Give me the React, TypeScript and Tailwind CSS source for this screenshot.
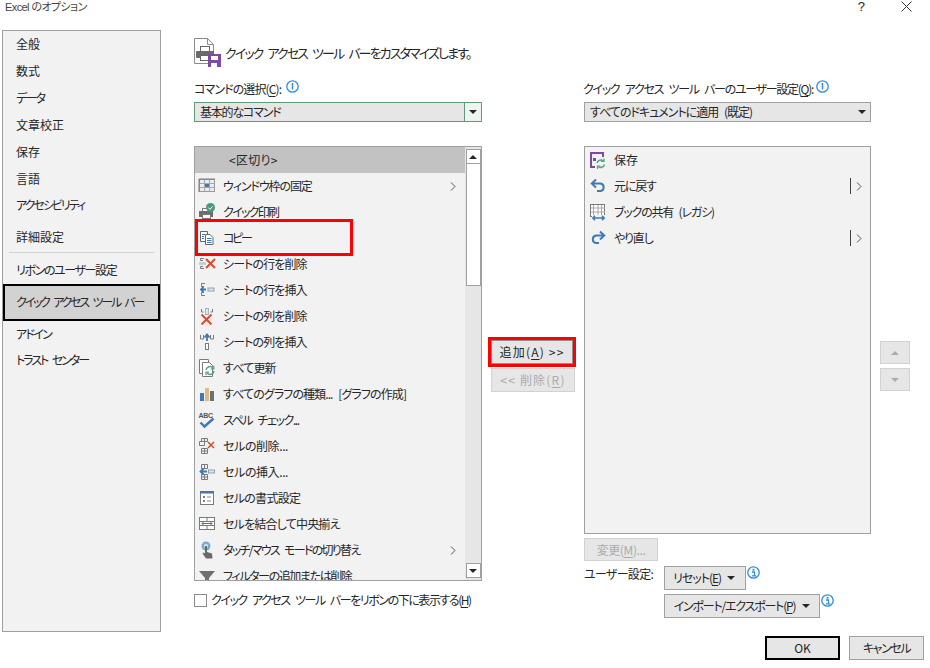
import React from "react";

const G = "#7a7a7a";
const B = "#3f78b5";
const R = "#d2502d";

const Svg = ({ children, w = 18, h = 18, vb }: { children: React.ReactNode; w?: number; h?: number; vb?: string }) => (
  <svg width={w} height={h} viewBox={vb ?? `0 0 ${w} ${h}`} fill="none" className="block shrink-0">
    {children}
  </svg>
);

const Freeze = () => (
  <Svg>
    <rect x="1.5" y="2.5" width="15" height="12" fill="#ececec" stroke="#9a9a9a" />
    <path d="M1.5 6.5h15M1.5 10.5h15M6.5 2.5v12M11.500 2.500v12" stroke="#a8a8a8" />
    <path d="M1 2h16M1 2v13" stroke="#7a7a7a" />
    <rect x="7" y="7" width="4" height="3" fill="#3f78b5" />
  </Svg>
);
const QuickPrint = () => (
  <Svg>
    <rect x="4.500" y="5.500" width="8" height="4" fill="#fff" stroke={G} />
    <rect x="1" y="8" width="14" height="6" fill="#6d6d6d" />
    <rect x="4.500" y="11.500" width="8" height="4" fill="#fff" stroke={G} />
    <circle cx="12.500" cy="4.500" r="4.500" fill="#4c9b78" />
    <path d="M10.300 4.600l1.700 1.700 2.600-3" stroke="#fff" />
  </Svg>
);
const Copy = () => (
  <Svg>
    <path d="M2.500 2.500h7v10h-7z" fill="#fff" stroke="#666" />
    <path d="M7.500 5.500h4.500l3 3v7H7.500z" fill="#fff" stroke="#666" />
    <path d="M9 9.500h4.500M9 11.500h4.500M9 13.500h4.500" stroke={B} />
    <path d="M4 5.500h3M4 7.500h2M4 9.500h2" stroke={B} />
  </Svg>
);
const XMark = ({ x, y, s = 9, sw = 2 }: { x: number; y: number; s?: number; sw?: number }) => (
  <path d={`M${x} ${y}l${s} ${s}M${x + s} ${y}l-${s} ${s}`} stroke={R} strokeWidth={sw} />
);
const DelRow = () => (
  <Svg>
    <path d="M6 3.500H2.500v2H5M6 13.500H2.500v-2H5" stroke={G} />
    <rect x="1" y="7" width="7" height="3" fill="#c3cfdd" />
    <XMark x={8} y={4} />
  </Svg>
);
const InsRow = () => (
  <Svg>
    <path d="M7 2.500H3.500v3H6M7 14.500H3.500v-3H6" stroke={G} />
    <path d="M8 8.500H3M5.500 6L3 8.500 5.500 11" stroke={B} strokeWidth="1.800" />
    <rect x="10" y="7" width="6" height="3" fill="#dfe5ec" stroke="#93a0ad" />
  </Svg>
);
const DelCol = () => (
  <Svg>
    <path d="M3.500 2v3h2M14.500 2v3h-2" stroke={G} />
    <rect x="7.500" y="1.500" width="3" height="6" fill="#dfe5ec" stroke="#a6b2c0" />
    <XMark x={3.500} y={7.500} s={10} />
  </Svg>
);
const InsCol = () => (
  <Svg>
    <path d="M2.500 2v4h3V2M12.500 2v4h3V2" stroke={G} />
    <path d="M9 8V2M6.500 4.500L9 1.500l2.500 3" stroke={B} strokeWidth="1.800" />
    <rect x="7.500" y="10.500" width="3" height="6" fill="#fff" stroke={G} />
  </Svg>
);
const RefreshAll = () => (
  <Svg w={20} h={20}>
    <path d="M1.500 1.500h9v14h-9z" fill="#fff" stroke={G} />
    <path d="M4.500 4.500h7l3 3v11h-10z" fill="#fff" stroke={G} />
    <path d="M8 12a4 4 0 017-2M16 13a4 4 0 01-7 2" stroke="#57a383" strokeWidth="1.600" />
    <path d="M15.800 7.800v3h-3M8 17.200v-3h3" stroke="#57a383" strokeWidth="1.200" />
  </Svg>
);
const Chart = () => (
  <Svg>
    <rect x="2" y="8" width="4" height="8" fill={B} />
    <rect x="7" y="3" width="4" height="13" fill="#e0b985" />
    <rect x="12" y="6" width="4" height="10" fill="#6f6f6f" />
  </Svg>
);
const Spell = () => (
  <svg width="18" height="18" viewBox="0 0 18 18" fill="none" className="block shrink-0">
    <text x="0.500" y="6.500" fontSize="7" fontWeight="700" fill="#555" fontFamily="Liberation Sans, sans-serif" letterSpacing="-0.300">ABC</text>
    <path d="M2.500 11.500l4 4 9-8" stroke={B} strokeWidth="2.400" />
  </svg>
);
const DelCell = () => (
  <Svg>
    <path d="M3.500 1.500h6v3h-6zM6.500 1.500v3M1.500 4.500h5v4h-5zM3.500 11.500h6v5h-6zM6.500 11.500v5M3.500 14h6" stroke={G} />
    <path d="M10 5l6 6M16 5l-6 6" stroke={R} strokeWidth="1.500" />
  </Svg>
);
const InsCell = () => (
  <Svg>
    <path d="M3.500 1.500h6v4h-6zM6.500 1.500v4M3.500 11.500h6v5h-6zM6.500 11.500v5M3.500 14h6" stroke={G} />
    <path d="M9 8.500H3M5.500 5.500L2.500 8.500l3 3" stroke={B} strokeWidth="1.800" />
    <rect x="10.500" y="7" width="6" height="3" fill="#dfe5ec" stroke="#93a0ad" />
  </Svg>
);
const CellFormat = () => (
  <Svg>
    <rect x="2.500" y="2.500" width="13" height="13" fill="#fff" stroke={G} />
    <rect x="2" y="2" width="14" height="2.500" fill={B} />
    <path d="M5 8h2M5 12h2" stroke="#555" strokeWidth="1.500" />
    <path d="M9 8h4M9 12h4" stroke="#888" />
  </Svg>
);
const Merge = () => (
  <Svg>
    <rect x="1.500" y="2.500" width="15" height="12" fill="#fff" stroke={G} />
    <path d="M2 6.500h14M2 10.500h14M9 2.500v4M9 10.500v4" stroke={G} />
    <path d="M4 8.500h10M5.500 7L4 8.500 5.500 10M12.500 7L14 8.500 12.500 10" stroke={B} />
  </Svg>
);
const Touch = () => (
  <Svg>
    <circle cx="8" cy="5" r="4.500" fill="#7da9d4" />
    <circle cx="8" cy="5" r="2" fill="#dbe7f2" />
    <path d="M7 5h2v6l5 1.500.5 5H8L4.500 12.500l1-1L7 12.500z" fill="#6a6a6a" />
  </Svg>
);
const Filter = () => (
  <Svg>
    <path d="M1 4h16l-6 7v6H7v-6z" fill="#6f6f6f" />
  </Svg>
);
const SaveQ = () => (
  <Svg>
    <path d="M1 1h14v5h-2V3H3v12h3v2H1z" fill="#7d4a9f" />
    <path d="M4 7h3v3H4z" fill="#7d4a9f" />
    <path d="M8 12a4 4 0 016.500-2M15.500 13.500a4 4 0 01-6.500 2" stroke="#57a383" strokeWidth="1.500" />
    <path d="M15 7.500v3h-3M8.500 18v-3h3" stroke="#57a383" strokeWidth="1.200" />
  </Svg>
);
const Undo = () => (
  <Svg>
    <path d="M4 6.500h7.500a3.800 3.800 0 010 7.500H8" stroke={B} strokeWidth="2" />
    <path d="M7 2.500L2.800 6.500 7 10.500" stroke={B} strokeWidth="2" />
  </Svg>
);
const Redo = () => (
  <Svg>
    <path d="M14 6.500H7a3.800 3.800 0 000 7.500h3" stroke={B} strokeWidth="2" />
    <path d="M11 2.500l4.200 4L11 10.500" stroke={B} strokeWidth="2" />
  </Svg>
);
const Share = () => (
  <Svg w={18} h={18}>
    <rect x="1.500" y="1.500" width="14" height="12" fill="#fff" stroke={G} />
    <path d="M4.500 2v11M9 2v11M12.500 2v11M2 5h14M2 9h14" stroke="#a8a8a8" />
    <rect x="3" y="12" width="14" height="5" fill="#f2f2f2" />
    <path d="M4 15h11M6 12.800L3.800 15 6 17.200M13 12.800l2.200 2.200-2.200 2.200" stroke={B} strokeWidth="1.500" />
  </Svg>
);
const HeaderIcon = () => (
  <Svg w={28} h={30}>
    <path d="M1.500.5h13l6 6v19H1.500z" fill="#fff" stroke="#8c8c8c" />
    <path d="M14.500.5v6h6" stroke="#8c8c8c" />
    <rect x="7.500" y="8.500" width="9" height="5" fill="#fff" stroke="#666" />
    <rect x="3" y="13" width="18" height="7" rx="1" fill="#6a6a6a" />
    <rect x="7.500" y="17.500" width="9" height="5" fill="#fff" stroke="#666" />
    <rect x="15" y="16" width="13" height="13" fill="#7d4a9f" />
    <rect x="18" y="18" width="7" height="4" fill="#fff" />
    <rect x="18" y="25" width="6" height="4" fill="#fff" />
  </Svg>
);

const Info = ({ bold = false }: { bold?: boolean }) => (
  <svg width="13" height="13" viewBox="0 0 13 13" fill="none" className="block shrink-0">
    <circle cx="6.500" cy="6.500" r="5.700" fill="#fff" stroke="#2e8fd6" strokeWidth="1.300" />
    {bold ? (
      <>
        <rect x="5.500" y="2.800" width="2" height="1.800" fill="#2e8fd6" />
        <path d="M5 6h2.500v3.500M5 9.800h4" stroke="#2e8fd6" strokeWidth="1.300" />
      </>
    ) : (
      <path d="M6.500 3v6.500" stroke="#2e8fd6" strokeWidth="1.500" />
    )}
  </svg>
);

const Tri = ({ up = false, color = "#262626" }: { up?: boolean; color?: string }) => (
  <svg width="8" height="4" viewBox="0 0 8 4" className="block shrink-0">
    <path d={up ? "M4 0l4 4H0z" : "M0 0h8L4 4z"} fill={color} />
  </svg>
);

const Chevron = () => (
  <svg width="6" height="9" viewBox="0 0 6 9" fill="none" className="block shrink-0">
    <path d="M1 .5l4 4-4 4" stroke="#555" />
  </svg>
);

type Row = { icon: React.ReactNode; label: string; more?: boolean; cls: string };

const commands: Row[] = [
  { icon: <Freeze />, label: "ウィンドウ枠の固定", more: true, cls: "tracking-[-1.1px]" },
  { icon: <QuickPrint />, label: "クイック印刷", cls: "tracking-[-1.7px]" },
  { icon: <Copy />, label: "コピー", cls: "tracking-[-2.3px]" },
  { icon: <DelRow />, label: "シートの行を削除", cls: "tracking-[-0.9px]" },
  { icon: <InsRow />, label: "シートの行を挿入", cls: "tracking-[-0.9px]" },
  { icon: <DelCol />, label: "シートの列を削除", cls: "tracking-[-0.9px]" },
  { icon: <InsCol />, label: "シートの列を挿入", cls: "tracking-[-0.9px]" },
  { icon: <RefreshAll />, label: "すべて更新", cls: "tracking-[-0.8px]" },
  { icon: <Chart />, label: "すべてのグラフの種類... [グラフの作成]", cls: "tracking-[-0.9px] [word-spacing:4px]" },
  { icon: <Spell />, label: "スペル チェック...", cls: "tracking-[-1.4px] [word-spacing:4px]" },
  { icon: <DelCell />, label: "セルの削除...", cls: "tracking-[-0.4px]" },
  { icon: <InsCell />, label: "セルの挿入...", cls: "tracking-[-0.4px]" },
  { icon: <CellFormat />, label: "セルの書式設定", cls: "tracking-[-0.7px]" },
  { icon: <Merge />, label: "セルを結合して中央揃え", cls: "tracking-[-0.8px]" },
  { icon: <Touch />, label: "タッチ/マウス モードの切り替え", more: true, cls: "tracking-[-1.7px] [word-spacing:4px]" },
  { icon: <Filter />, label: "フィルターの追加または削除", cls: "tracking-[-1.4px]" },
];

const quick: (Row & { split?: boolean })[] = [
  { icon: <SaveQ />, label: "保存", cls: "" },
  { icon: <Undo />, label: "元に戻す", split: true, cls: "tracking-[-1.2px]" },
  { icon: <Share />, label: "ブックの共有 (レガシ)", cls: "tracking-[-1.2px] [word-spacing:4px]" },
  { icon: <Redo />, label: "やり直し", split: true, cls: "tracking-[-1.2px]" },
];

const side1 = [
  { t: "全般", cls: "" },
  { t: "数式", cls: "" },
  { t: "データ", cls: "tracking-[-1.7px]" },
  { t: "文章校正", cls: "" },
  { t: "保存", cls: "" },
  { t: "言語", cls: "" },
  { t: "アクセシビリティ", cls: "tracking-[-2px]" },
];

const U = ({ children }: { children: React.ReactNode }) => <span className="underline underline-offset-2">{children}</span>;

export default function App() {
  return (
    <div className="w-[930px] h-[668px] bg-white overflow-hidden text-[12px] leading-[16px] text-[#262626] font-['Noto_Sans_CJK_JP','Liberation_Sans',sans-serif] [font-feature-settings:'palt']">
      <div className="h-[30px] flex items-start pl-[5px]">
        <span className="leading-[14px] text-[11px] tracking-[-0.6px] font-['Liberation_Sans','Noto_Sans_CJK_JP',sans-serif] text-[#444]">Excel のオプション</span>
        <span className="ml-auto leading-[14px] text-[13px] font-['Liberation_Sans',sans-serif]">?</span>
        <svg width="11" height="11" viewBox="0 0 11 11" className="ml-[36px] mr-[18px] mt-px block" fill="none">
          <path d="M.5.5l10 10M10.500.500l-10 10" stroke="#333" />
        </svg>
      </div>

      <div className="flex pl-[2px]">
        <nav className="w-[159px] h-[602px] border border-[#a0a0a0] bg-[#f2f2f2] shrink-0 flex flex-col">
          {side1.map((s) => (
            <div key={s.t} className={`h-[26.83px] shrink-0 flex items-center pl-[13px] ${s.cls}`}>{s.t}</div>
          ))}
          <div className="h-[27px] mt-[5px] shrink-0 flex items-center pl-[13px]">詳細設定</div>
          <div className="mx-[6px] mt-px border-t border-[#d0d0d0]" />
          <div className="h-[31px] pt-[3px] shrink-0 flex items-center pl-[13px] tracking-[-1.4px]">リボンのユーザー設定</div>
          <div className="h-[37px] shrink-0 flex items-center pl-[11px] bg-[#d2d2d2] border-2 border-black whitespace-nowrap tracking-[-2.2px] [word-spacing:4px]">クイック アクセス ツール バー</div>
          <div className="h-[26px] shrink-0 flex items-center pl-[13px] tracking-[-1.7px]">アドイン</div>
          <div className="h-[27px] shrink-0 flex items-center pl-[13px] tracking-[-2.05px] [word-spacing:4px]">トラスト センター</div>
        </nav>

        <main className="ml-[33px] w-[736px] shrink-0">
          <div className="flex items-center h-[30px] mt-[8px] mb-[11px] -ml-px">
            <HeaderIcon />
            <span className="ml-[4px] text-[13px] whitespace-nowrap tracking-[-1.9px] [word-spacing:4px]">クイック アクセス ツール バーをカスタマイズします。</span>
          </div>

          <div className="flex h-[557px]">
            <section className="w-[288px] shrink-0 flex flex-col">
              <div className="flex items-start h-[23px] pt-px">
                <span className="leading-[18px] tracking-[-0.9px]">コマンドの選択(<U>C</U>):</span>
                <span className="ml-[5px]"><Info /></span>
              </div>
              <div className="h-[20px] flex border border-[#5c9a78] bg-[#e6e6e6]">
                <div className="flex-1 flex items-center pl-[5px] tracking-[-1.2px]">基本的なコマンド</div>
                <div className="w-[17px] border-l border-[#5c9a78] bg-[#eef5f1] flex items-center justify-center"><Tri /></div>
              </div>
              <div className="relative mt-[24px] h-[435px] border border-[#a0a0a0] bg-[#f2f2f2] flex overflow-hidden">
                <div className="flex-1 min-w-0">
                  <div className="h-[26px] bg-[#c2c2c2] flex items-center pl-[34px] pr-2 tracking-[0.3px]">&lt;区切り&gt;</div>
                  {commands.map((r) => (
                    <div key={r.label} className="h-[26px] flex items-center pl-[3px] pr-[8px]">
                      <span className="w-[26px] shrink-0">{r.icon}</span>
                      <span className={`whitespace-nowrap -ml-px ${r.cls}`}>{r.label}</span>
                      {r.more && <span className="ml-auto mr-px"><Chevron /></span>}
                    </div>
                  ))}
                </div>
                <div className="w-[16px] shrink-0 bg-[#e6e6e6] flex flex-col items-center pt-[2px] pb-[2px]">
                  <div className="w-[15px] h-[15px] bg-white border border-[#a0a0a0] flex items-center justify-center"><Tri up /></div>
                  <div className="w-[15px] h-[122px] bg-white border border-[#a0a0a0] border-t-0" />
                  <div className="w-[15px] h-[15px] bg-white border border-[#a0a0a0] flex items-center justify-center mt-auto"><Tri /></div>
                </div>
                <div className="absolute left-0 top-[72px] w-[158px] h-[37px] border-[3px] border-[#ff0000]" />
              </div>
              <label className="flex items-center mt-[12px] h-[14px]">
                <span className="w-[13px] h-[13px] border border-[#8a8a8a] bg-white shrink-0" />
                <span className="ml-[4px] whitespace-nowrap tracking-[-1.45px] [word-spacing:4px]">クイック アクセス ツール バーをリボンの下に表示する(<U>H</U>)</span>
              </label>
            </section>

            <section className="w-[102px] shrink-0 flex flex-col pt-[258px]">
              <div className="ml-[6px] w-[88px] h-[30px] border-[3px] border-[#ff0000]">
                <div className="h-full bg-[#e6e6e6] border border-[#8f8f8f] flex items-center justify-center tracking-[1.2px] whitespace-nowrap">追加(<U>A</U>) &gt;&gt;</div>
              </div>
              <div className="ml-[9px] mt-px w-[84px] h-[24px] bg-[#e6e6e6] border border-[#d2d2d2] flex items-center justify-center text-[#ababab] tracking-[1.2px] whitespace-nowrap">&lt;&lt; 削除(<U>R</U>)</div>
            </section>

            <section className="w-[287px] shrink-0 flex flex-col">
              <div className="flex items-start h-[23px] pt-px">
                <span className="leading-[18px] whitespace-nowrap -ml-px tracking-[-1.3px] [word-spacing:4px]">クイック アクセス ツール バーのユーザー設定(<U>Q</U>):</span>
                <span className="ml-[3px]"><Info /></span>
              </div>
              <div className="h-[20px] flex items-center border border-[#a0a0a0] bg-[#e6e6e6] pl-[5px] pr-[4px]">
                <span className="tracking-[-1px] [word-spacing:4px]">すべてのドキュメントに適用 (既定)</span>
                <span className="ml-auto"><Tri /></span>
              </div>
              <div className="mt-[24px] h-[388px] border border-[#a0a0a0] bg-[#f2f2f2]">
                {quick.map((r) => (
                  <div key={r.label} className="h-[26px] flex items-center pl-[4px] pr-[8px]">
                    <span className="w-[25px] shrink-0">{r.icon}</span>
                    <span className={r.cls}>{r.label}</span>
                    {r.split && (
                      <span className="ml-auto flex items-center gap-[5px]">
                        <span className="w-px h-[16px] bg-[#404040]" />
                        <Chevron />
                      </span>
                    )}
                  </div>
                ))}
              </div>
              <div className="mt-[4px] w-[74px] h-[23px] bg-[#e6e6e6] border border-[#d2d2d2] flex items-center justify-center text-[#ababab] tracking-[-0.4px]">変更(<U>M</U>)...</div>
              <div className="flex mt-[5px]">
                <span className="w-[80px] shrink-0 leading-[16px] tracking-[-0.7px]">ユーザー設定:</span>
                <div className="flex flex-col gap-[4px]">
                  <div className="flex items-start">
                    <div className="w-[82px] h-[24px] bg-[#e6e6e6] border border-[#a0a0a0] flex items-center pl-[8px] gap-[6px] whitespace-nowrap">
                      <span className="tracking-[-1px]">リセット(<U>E</U>)</span><Tri />
                    </div>
                    <span className="ml-px"><Info bold /></span>
                  </div>
                  <div className="flex items-start">
                    <div className="w-[156px] h-[24px] bg-[#e6e6e6] border border-[#a0a0a0] flex items-center justify-center gap-[7px] whitespace-nowrap">
                      <span className="tracking-[-1.2px]">インポート/エクスポート(<U>P</U>)</span><Tri />
                    </div>
                    <span className="ml-px"><Info bold /></span>
                  </div>
                </div>
              </div>
            </section>

            <section className="ml-[9px] w-[30px] shrink-0 flex flex-col gap-[4px] pt-[262px]">
              <div className="h-[23px] bg-[#e6e6e6] border border-[#d2d2d2] flex items-center justify-center"><Tri up color="#ababab" /></div>
              <div className="h-[23px] bg-[#e6e6e6] border border-[#d2d2d2] flex items-center justify-center"><Tri color="#ababab" /></div>
            </section>
          </div>

          <div className="flex justify-end gap-[9px] pr-[6px]">
            <div className="w-[75px] h-[24px] bg-[#e6e6e6] border-2 border-black flex items-center justify-center">OK</div>
            <div className="w-[75px] h-[24px] bg-[#e6e6e6] border border-[#a0a0a0] flex items-center justify-center tracking-[-1.4px]">キャンセル</div>
          </div>
        </main>
      </div>
    </div>
  );
}
